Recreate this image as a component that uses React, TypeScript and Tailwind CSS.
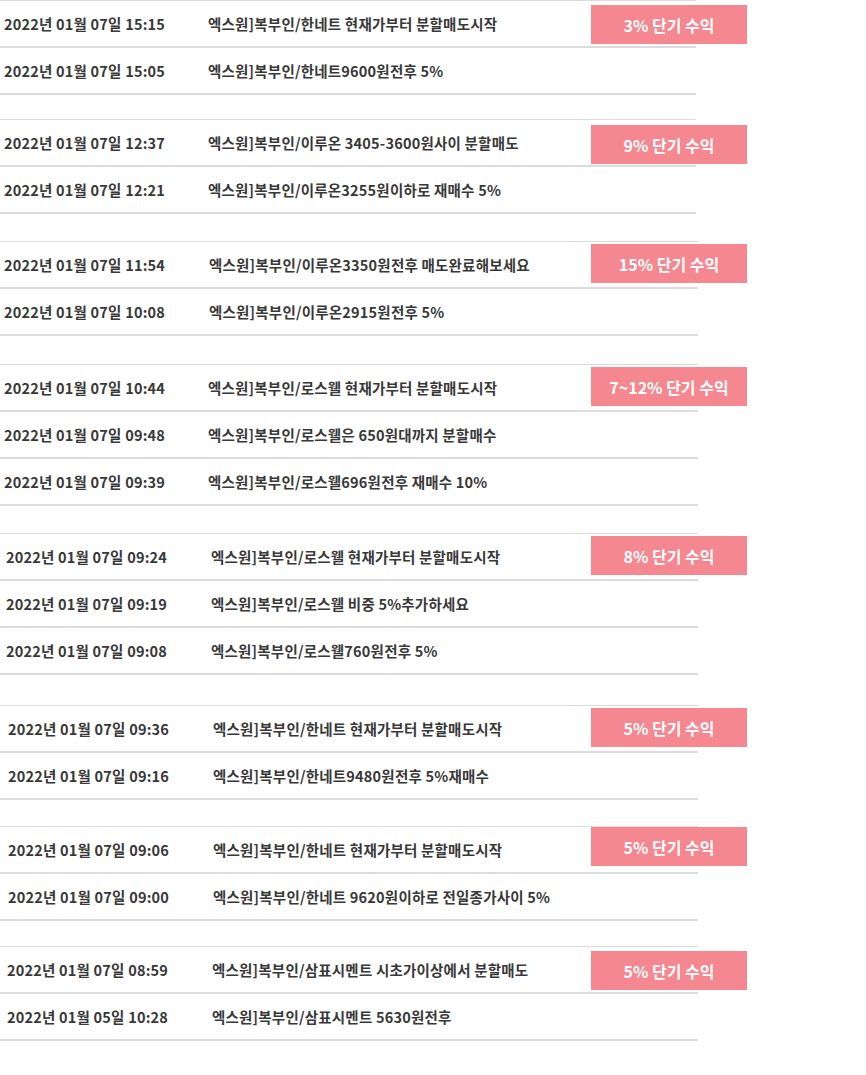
import React from "react";

type Row = { date: string; msg: string };
type Group = {
  mt: string;
  dx: string;
  mx: string;
  lw: string;
  badge: string;
  bt: string;
  rows: Row[];
};

const groups: Group[] = [
  {
    mt: "mt-0",
    dx: "pl-[4px]",
    mx: "pl-[208px]",
    lw: "w-[696px]",
    badge: "3% 단기 수익",
    bt: "top-[5px]",
    rows: [
      { date: "2022년 01월 07일 15:15", msg: "엑스원]복부인/한네트 현재가부터 분할매도시작" },
      { date: "2022년 01월 07일 15:05", msg: "엑스원]복부인/한네트9600원전후 5%" },
    ],
  },
  {
    mt: "mt-[24px]",
    dx: "pl-[4px]",
    mx: "pl-[208px]",
    lw: "w-[696px]",
    badge: "9% 단기 수익",
    bt: "top-[6px]",
    rows: [
      { date: "2022년 01월 07일 12:37", msg: "엑스원]복부인/이루온 3405-3600원사이 분할매도" },
      { date: "2022년 01월 07일 12:21", msg: "엑스원]복부인/이루온3255원이하로 재매수 5%" },
    ],
  },
  {
    mt: "mt-[27px]",
    dx: "pl-[4px]",
    mx: "pl-[209px]",
    lw: "w-[698px]",
    badge: "15% 단기 수익",
    bt: "top-[3px]",
    rows: [
      { date: "2022년 01월 07일 11:54", msg: "엑스원]복부인/이루온3350원전후 매도완료해보세요" },
      { date: "2022년 01월 07일 10:08", msg: "엑스원]복부인/이루온2915원전후 5%" },
    ],
  },
  {
    mt: "mt-[28px]",
    dx: "pl-[4px]",
    mx: "pl-[208px]",
    lw: "w-[698px]",
    badge: "7~12% 단기 수익",
    bt: "top-[3px]",
    rows: [
      { date: "2022년 01월 07일 10:44", msg: "엑스원]복부인/로스웰 현재가부터 분할매도시작" },
      { date: "2022년 01월 07일 09:48", msg: "엑스원]복부인/로스웰은 650원대까지 분할매수" },
      { date: "2022년 01월 07일 09:39", msg: "엑스원]복부인/로스웰696원전후 재매수 10%" },
    ],
  },
  {
    mt: "mt-[27px]",
    dx: "pl-[6px]",
    mx: "pl-[211px]",
    lw: "w-[698px]",
    badge: "8% 단기 수익",
    bt: "top-[3px]",
    rows: [
      { date: "2022년 01월 07일 09:24", msg: "엑스원]복부인/로스웰 현재가부터 분할매도시작" },
      { date: "2022년 01월 07일 09:19", msg: "엑스원]복부인/로스웰 비중 5%추가하세요" },
      { date: "2022년 01월 07일 09:08", msg: "엑스원]복부인/로스웰760원전후 5%" },
    ],
  },
  {
    mt: "mt-[30px]",
    dx: "pl-[8px]",
    mx: "pl-[213px]",
    lw: "w-[698px]",
    badge: "5% 단기 수익",
    bt: "top-[3px]",
    rows: [
      { date: "2022년 01월 07일 09:36", msg: "엑스원]복부인/한네트 현재가부터 분할매도시작" },
      { date: "2022년 01월 07일 09:16", msg: "엑스원]복부인/한네트9480원전후 5%재매수" },
    ],
  },
  {
    mt: "mt-[26px]",
    dx: "pl-[8px]",
    mx: "pl-[213px]",
    lw: "w-[698px]",
    badge: "5% 단기 수익",
    bt: "top-[1px]",
    rows: [
      { date: "2022년 01월 07일 09:06", msg: "엑스원]복부인/한네트 현재가부터 분할매도시작" },
      { date: "2022년 01월 07일 09:00", msg: "엑스원]복부인/한네트 9620원이하로 전일종가사이 5%" },
    ],
  },
  {
    mt: "mt-[25px]",
    dx: "pl-[7px]",
    mx: "pl-[212px]",
    lw: "w-[698px]",
    badge: "5% 단기 수익",
    bt: "top-[5px]",
    rows: [
      { date: "2022년 01월 07일 08:59", msg: "엑스원]복부인/삼표시멘트 시초가이상에서 분할매도" },
      { date: "2022년 01월 05일 10:28", msg: "엑스원]복부인/삼표시멘트 5630원전후" },
    ],
  },
];

export default function App() {
  return (
    <div
      className="w-[866px] min-h-[1075px] bg-white text-[#383838]"
      style={{ fontFamily: '"Noto Sans CJK KR", "Noto Sans", sans-serif' }}
    >
      {groups.map((g, gi) => (
        <div key={gi} className={`relative ${g.mt}`}>
          <div className={`${g.lw} border-t border-[#dcdcdc]`}>
            {g.rows.map((r, ri) => (
              <div
                key={ri}
                className="relative flex h-[47px] items-center border-b-2 border-[#dcdcdc] text-[14.5px] font-bold tracking-[0.2px]"
              >
                <span className={`absolute left-0 ${g.dx} whitespace-nowrap`}>{r.date}</span>
                <span className={`absolute left-0 ${g.mx} whitespace-nowrap`}>{r.msg}</span>
              </div>
            ))}
          </div>
          <div
            className={`absolute ${g.bt} left-[591px] flex h-[39px] w-[156px] items-center justify-center bg-[#f48790] text-[16px] font-bold text-white`}
          >
            {g.badge}
          </div>
        </div>
      ))}
    </div>
  );
}
